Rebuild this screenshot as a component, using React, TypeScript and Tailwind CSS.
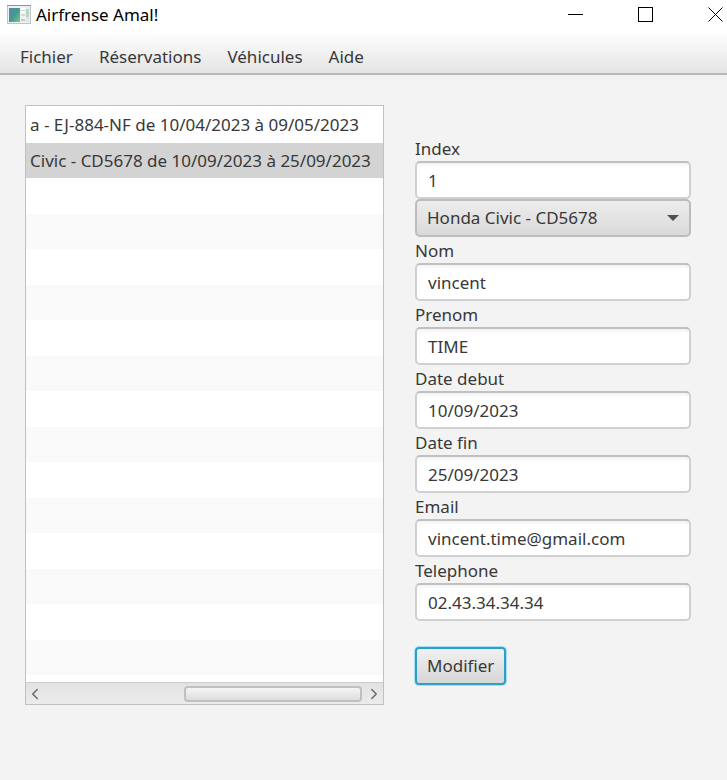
import { ChevronLeft, ChevronRight } from "lucide-react";

const menus = ["Fichier", "Réservations", "Véhicules", "Aide"];

const reservations = [
  "a - EJ-884-NF de 10/04/2023 à 09/05/2023",
  "Civic - CD5678 de 10/09/2023 à 25/09/2023",
];

const emptyPairs = [0, 1, 2, 3, 4, 5, 6];

const fields = [
  { id: "nom", label: "Nom", value: "vincent" },
  { id: "prenom", label: "Prenom", value: "TIME" },
  { id: "debut", label: "Date debut", value: "10/09/2023" },
  { id: "fin", label: "Date fin", value: "25/09/2023" },
  { id: "email", label: "Email", value: "vincent.time@gmail.com" },
  { id: "telephone", label: "Telephone", value: "02.43.34.34.34" },
];

function AppIcon() {
  return (
    <svg width="24" height="20" viewBox="0 0 24 20" aria-hidden="true">
      <defs>
        <linearGradient id="pane" x1="0" y1="0" x2="1" y2="1">
          <stop offset="0" stopColor="#5a86b0" />
          <stop offset="0.5" stopColor="#439a8c" />
          <stop offset="1" stopColor="#7cc48f" />
        </linearGradient>
      </defs>
      <rect x="0.5" y="0.5" width="23" height="18" fill="#eef1f3" stroke="#bcc3c9" />
      <rect x="0" y="0" width="24" height="1" fill="#8796a3" />
      <rect x="2" y="3" width="11" height="14" fill="url(#pane)" />
      <rect x="14" y="3" width="4" height="5" fill="#fff" />
      <rect x="14" y="5" width="4" height="1" fill="#c9ced2" />
      <rect x="14" y="9" width="4" height="2" fill="#d3d7da" />
      <rect x="14" y="14" width="4" height="2" fill="#cdc3ce" />
      <rect x="19" y="4" width="3" height="8" fill="#b2d6bf" />
      <rect x="19" y="12" width="3" height="5" fill="#dfe3e5" />
    </svg>
  );
}

function Field({ id, label, value }: { id: string; label: string; value: string }) {
  return (
    <div className="flex flex-col">
      <label htmlFor={id} className="h-[26px] leading-[28px]">
        {label}
      </label>
      <input
        id={id}
        defaultValue={value}
        className="h-[38px] w-full rounded-[5px] border-2 border-[#d0d0d0] border-t-[#c0c0c0] bg-white bg-linear-to-b from-[#f3f3f3] to-white to-15% px-[11px] outline-none"
      />
    </div>
  );
}

export default function App() {
  return (
    <div className="min-h-screen bg-[#f3f3f3] font-['Noto_Sans','Open_Sans',sans-serif] text-[17px] text-[#383838]">
      <header className="flex h-[31px] items-start justify-between bg-white text-black">
        <div className="flex items-center gap-[5px] pl-[7px] leading-[30px]">
          <AppIcon />
          <h1>Airfrense Amal!</h1>
        </div>
        <div className="flex h-[30px] items-center gap-[54px] pr-[3px]">
          <button type="button" aria-label="Réduire">
            <svg width="16" height="16" viewBox="0 0 16 16" stroke="currentColor">
              <path d="M0 7.5h15" />
            </svg>
          </button>
          <button type="button" aria-label="Agrandir">
            <svg width="16" height="16" viewBox="0 0 16 16" fill="none" stroke="currentColor">
              <rect x="0.5" y="0.5" width="14" height="14" />
            </svg>
          </button>
          <button type="button" aria-label="Fermer">
            <svg width="16" height="16" viewBox="0 0 16 16" stroke="currentColor">
              <path d="M0.5 0.5l14 14M14.5 0.5l-14 14" />
            </svg>
          </button>
        </div>
      </header>

      <nav className="flex h-[44px] items-center gap-[26px] border-b-2 border-[#b8b8b8] bg-linear-to-b from-white to-[#e4e4e4] pt-[10px] pl-5">
        {menus.map((name) => (
          <button key={name} type="button">
            {name}
          </button>
        ))}
      </nav>

      <main className="grid grid-cols-[359fr_276fr] items-start gap-x-[31px] pt-[30px] pr-[36px] pl-[25px]">
        <section className="border border-[#c0c0c0] bg-white pt-px">
          <ul>
            <li className="h-[36px] overflow-hidden pl-1 leading-[36px] whitespace-nowrap">
              {reservations[0]}
            </li>
            <li className="h-[35px] overflow-hidden bg-[#d3d3d3] pl-1 leading-[36px] whitespace-nowrap">
              {reservations[1]}
            </li>
          </ul>
          {emptyPairs.map((n) => (
            <div key={n} className="pt-[36px]">
              <div className="h-[35px] bg-[#f9f9f9]" />
            </div>
          ))}
          <div className="mt-[7px] flex h-[22px] items-center border-t border-[#cdcdcd] bg-linear-to-b from-[#e2e2e2] to-[#ebebeb] text-[#6a6a6a]">
            <button type="button" aria-label="Défiler à gauche" className="w-[18px]">
              <ChevronLeft size={18} strokeWidth={2} />
            </button>
            <div className="flex flex-1 justify-end">
              <div className="h-4 w-[56%] rounded-[4px] border-2 border-[#c0c0c0] bg-linear-to-b from-[#f5f5f5] to-[#dedede]" />
            </div>
            <button type="button" aria-label="Défiler à droite" className="flex w-[21px] justify-end">
              <ChevronRight size={18} strokeWidth={2} />
            </button>
          </div>
        </section>

        <form className="flex flex-col pt-[30px]">
          <Field id="index" label="Index" value="1" />
          <div className="relative">
            <select
              aria-label="Véhicule"
              className="block h-[38px] w-full appearance-none rounded-[5px] border-2 border-[#bcbcbc] bg-linear-to-b from-[#ededed] to-[#d9d9d9] px-[10px] outline-none"
            >
              <option>Honda Civic - CD5678</option>
            </select>
            <svg
              className="pointer-events-none absolute top-4 right-3"
              width="12"
              height="6"
              viewBox="0 0 12 6"
              fill="#505050"
              aria-hidden="true"
            >
              <path d="M0 0h12L6 6z" />
            </svg>
          </div>
          {fields.map((field) => (
            <Field key={field.id} {...field} />
          ))}
          <button
            type="button"
            className="mt-[26px] h-[38px] self-start rounded-[4px] border-2 border-[#2f9fc6] bg-linear-to-b from-[#f1f1f1] to-[#d6d6d6] px-[10px] shadow-[0_0_0_1px_#a5e0f5]"
          >
            Modifier
          </button>
        </form>
      </main>
    </div>
  );
}
